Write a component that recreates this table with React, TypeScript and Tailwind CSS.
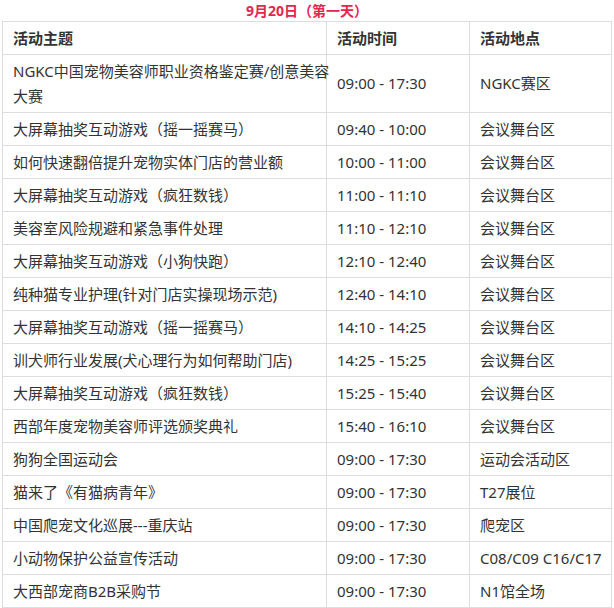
import React from 'react';

interface Row {
  topic: React.ReactNode;
  time: string;
  place: string;
}

const rows: Row[] = [
  {
    topic: (
      <>
        NGKC中国宠物美容师职业资格鉴定赛/创意美容
        <br />
        大赛
      </>
    ),
    time: '09:00 - 17:30',
    place: 'NGKC赛区',
  },
  { topic: '大屏幕抽奖互动游戏（摇一摇赛马）', time: '09:40 - 10:00', place: '会议舞台区' },
  { topic: '如何快速翻倍提升宠物实体门店的营业额', time: '10:00 - 11:00', place: '会议舞台区' },
  { topic: '大屏幕抽奖互动游戏（疯狂数钱）', time: '11:00 - 11:10', place: '会议舞台区' },
  { topic: '美容室风险规避和紧急事件处理', time: '11:10 - 12:10', place: '会议舞台区' },
  { topic: '大屏幕抽奖互动游戏（小狗快跑）', time: '12:10 - 12:40', place: '会议舞台区' },
  { topic: '纯种猫专业护理(针对门店实操现场示范)', time: '12:40 - 14:10', place: '会议舞台区' },
  { topic: '大屏幕抽奖互动游戏（摇一摇赛马）', time: '14:10 - 14:25', place: '会议舞台区' },
  { topic: '训犬师行业发展(犬心理行为如何帮助门店)', time: '14:25 - 15:25', place: '会议舞台区' },
  { topic: '大屏幕抽奖互动游戏（疯狂数钱）', time: '15:25 - 15:40', place: '会议舞台区' },
  { topic: '西部年度宠物美容师评选颁奖典礼', time: '15:40 - 16:10', place: '会议舞台区' },
  { topic: '狗狗全国运动会', time: '09:00 - 17:30', place: '运动会活动区' },
  { topic: '猫来了《有猫病青年》', time: '09:00 - 17:30', place: 'T27展位' },
  { topic: '中国爬宠文化巡展---重庆站', time: '09:00 - 17:30', place: '爬宠区' },
  { topic: '小动物保护公益宣传活动', time: '09:00 - 17:30', place: 'C08/C09 C16/C17' },
  { topic: '大西部宠商B2B采购节', time: '09:00 - 17:30', place: 'N1馆全场' },
];

const cell = 'border border-[#dddddd] pl-[10px] pr-[4px] py-[3.5px] align-middle whitespace-nowrap';

export default function App() {
  return (
    <div
      className="w-[614px] h-[608px] bg-white overflow-hidden text-[#333333]"
      style={{ fontFamily: '"Noto Sans", "Noto Sans CJK SC", sans-serif' }}
    >
      <p className="h-[21px] text-center text-[14px] leading-[21px] font-bold text-[#e3264d]">
        9月20日（第一天）
      </p>
      <table className="ml-[2px] w-[609px] border-collapse table-fixed text-[15px] leading-[25px]">
        <colgroup>
          <col className="w-[324px]" />
          <col className="w-[143px]" />
          <col className="w-[142px]" />
        </colgroup>
        <thead>
          <tr>
            <th className={`${cell} text-left font-bold`}>活动主题</th>
            <th className={`${cell} text-left font-bold`}>活动时间</th>
            <th className={`${cell} text-left font-bold`}>活动地点</th>
          </tr>
        </thead>
        <tbody>
          {rows.map((r, i) => (
            <tr key={i}>
              <td className={cell}>{r.topic}</td>
              <td className={cell}>{r.time}</td>
              <td className={cell}>{r.place}</td>
            </tr>
          ))}
        </tbody>
      </table>
    </div>
  );
}
